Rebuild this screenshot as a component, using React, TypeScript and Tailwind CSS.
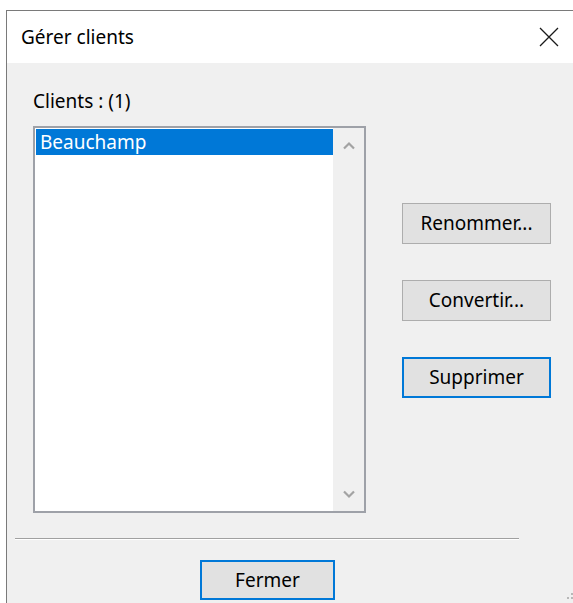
import React from "react";

const font = { fontFamily: '"Segoe UI", "Noto Sans", "Open Sans", sans-serif' };

const ChevronUp = () => (
    <svg width="14" height="9" viewBox="0 0 14 9" fill="none">
        <path d="M2 7.5 L7 2.5 L12 7.5" stroke="#a3a3a3" strokeWidth="2.2" />
    </svg>
);

const ChevronDown = () => (
    <svg width="14" height="9" viewBox="0 0 14 9" fill="none">
        <path d="M2 1.5 L7 6.5 L12 1.5" stroke="#a3a3a3" strokeWidth="2.2" />
    </svg>
);

const DialogButton = ({ label, focused }: { label: string; focused?: boolean }) => (
    <button
        className={
            focused
                ? "w-[149px] h-[41px] bg-[#e1e1e1] border-2 border-[#0078d7] text-[19px] text-black"
                : "w-[149px] h-[41px] bg-[#e1e1e1] border border-[#adadad] text-[19px] text-black"
        }
    >
        {label}
    </button>
);

const App = () => {
    const clients = ["Beauchamp"];

    return (
        <div className="w-[573px] h-[603px] bg-white pt-[10px] pl-[6px] overflow-hidden" style={font}>
            <div className="w-[580px] h-[600px] border-l border-t border-[#7a7a7a] flex flex-col">
                {/* title bar */}
                <div className="h-[52px] bg-white flex items-center justify-between pl-[14px] pr-[27px]">
                    <span className="text-[19px] text-black">Gérer clients</span>
                    <svg width="20" height="20" viewBox="0 0 20 20">
                        <path d="M1 1 L19 19 M19 1 L1 19" stroke="#1a1a1a" strokeWidth="1.3" />
                    </svg>
                </div>

                <div className="flex-1 bg-[#f0f0f0] relative">
                    <div className="flex pl-[26px] pt-[26px]">
                        <div className="flex flex-col">
                            <span className="text-[19px] leading-[24px] text-black">Clients : ({clients.length})</span>
                            <div className="mt-[13px] w-[333px] h-[387px] border-2 border-[#9ea1a8] bg-white flex">
                                <div className="flex-1 pt-[1px] pl-[1px]">
                                    {clients.map((c) => (
                                        <div key={c} className="h-[26px] bg-[#0078d7] text-white text-[19px] leading-[26px] pl-[4px]">
                                            {c}
                                        </div>
                                    ))}
                                </div>
                                <div className="w-[31px] bg-[#f0f0f0] flex flex-col items-center justify-between pt-[13px] pb-[12px]">
                                    <ChevronUp />
                                    <ChevronDown />
                                </div>
                            </div>
                        </div>

                        <div className="ml-[36px] mt-[114px] flex flex-col gap-[36px]">
                            <DialogButton label="Renommer..." />
                            <DialogButton label="Convertir..." />
                            <DialogButton label="Supprimer" focused />
                        </div>
                    </div>

                    <div className="ml-[8px] mt-[25px] w-[504px] h-[2px] border-t border-[#a0a0a0] bg-white" />

                    <div className="mt-[20px] pl-[193px]">
                        <button className="w-[135px] h-[40px] bg-[#e1e1e1] border-2 border-[#0078d7] text-[19px] text-black">Fermer</button>
                    </div>

                    {/* resize grip */}
                    <div className="absolute left-[560px] top-[530px] grid grid-cols-2 gap-[2px]">
                        <div className="w-[2px] h-[2px]" />
                        <div className="w-[2px] h-[2px] bg-[#b8b8b8]" />
                        <div className="w-[2px] h-[2px] bg-[#b8b8b8]" />
                        <div className="w-[2px] h-[2px] bg-[#b8b8b8]" />
                    </div>
                </div>
            </div>
        </div>
    );
};

export default App;
